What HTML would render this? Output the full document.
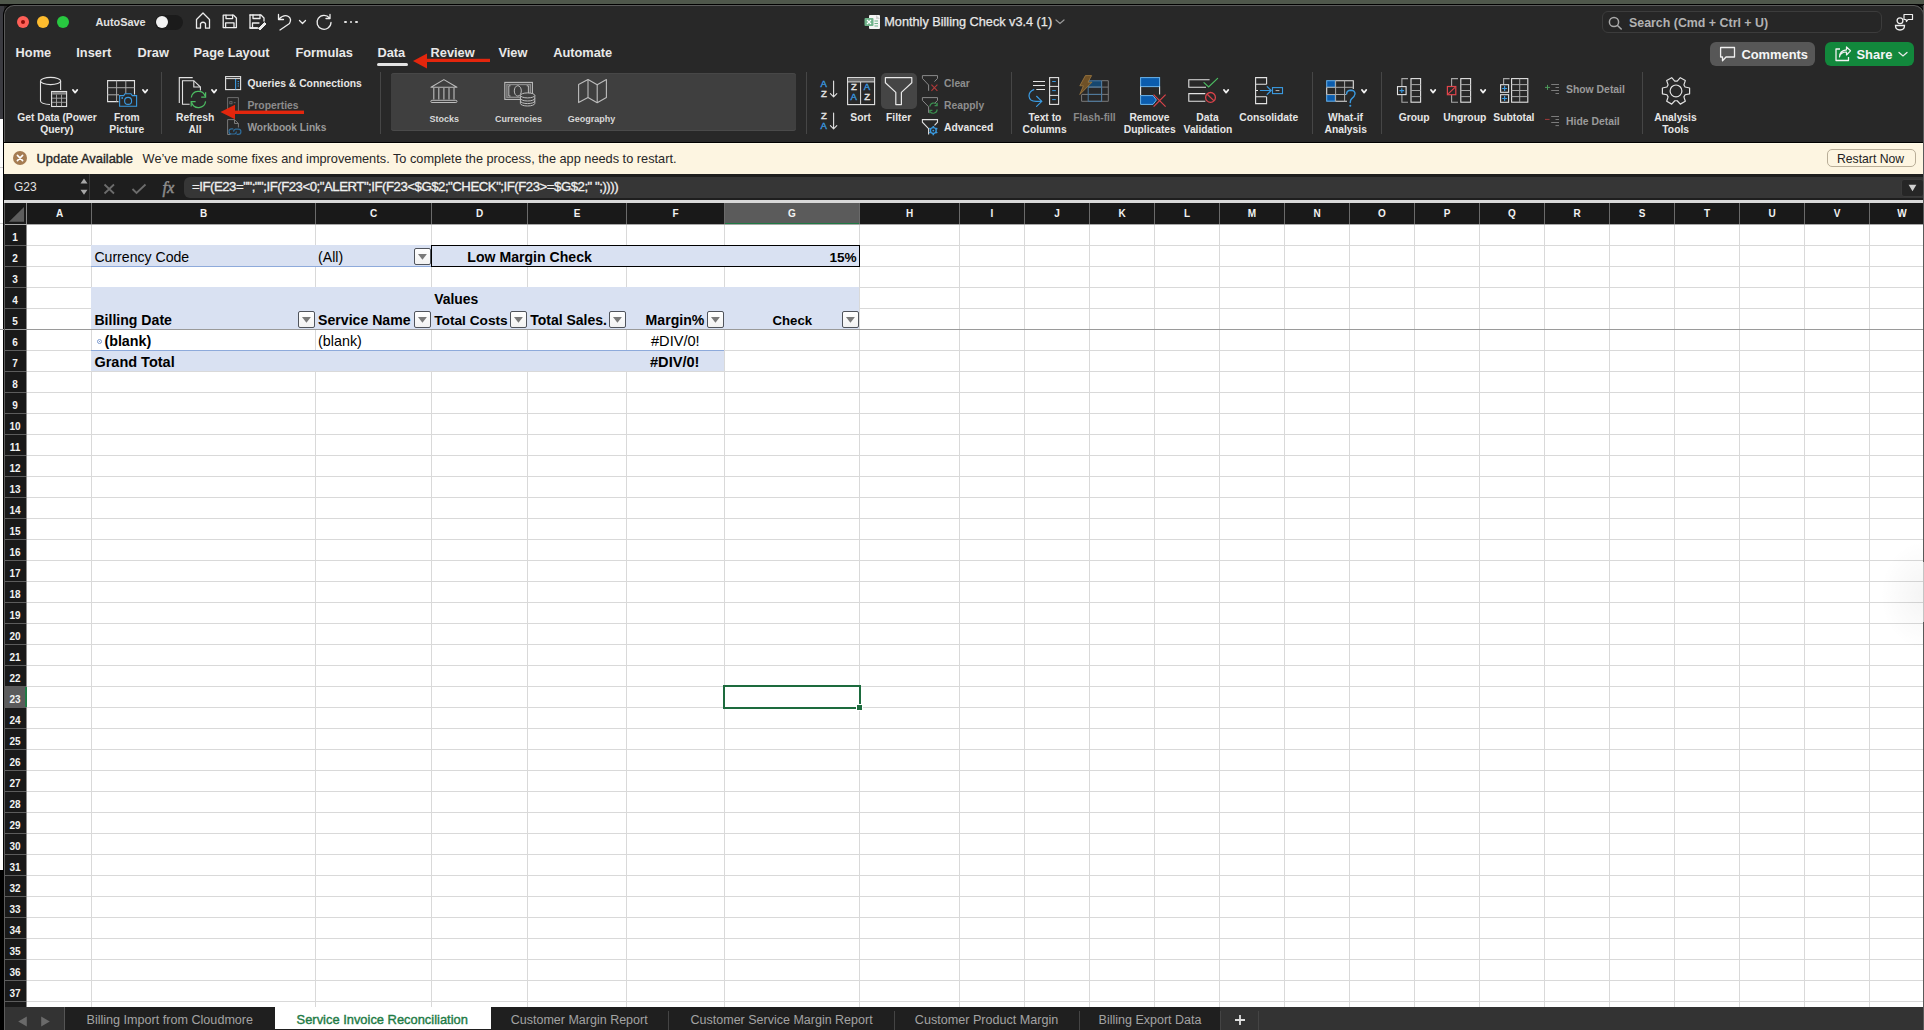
<!DOCTYPE html><html><head><meta charset="utf-8"><style>
html,body{margin:0;padding:0;width:1924px;height:1030px;overflow:hidden;background:#282828;}
.t{position:absolute;white-space:pre;line-height:1;}
.r{position:absolute;}
</style></head><body>
<div class="r" style="left:0px;top:0px;width:1924px;height:5px;background:#4f574b;"></div>
<div class="r" style="left:0px;top:4px;width:1924px;height:1px;background:#0a0a0a;"></div>
<div class="r" style="left:0px;top:5px;width:4px;height:114px;background:#3a3a40;"></div>
<div class="r" style="left:0px;top:119px;width:4px;height:751px;background:#fdfdfd;"></div>
<div class="r" style="left:0px;top:167px;width:4px;height:1px;background:#cfcfcf;"></div>
<div class="r" style="left:0px;top:223px;width:4px;height:1px;background:#cfcfcf;"></div>
<div class="r" style="left:0px;top:870px;width:4px;height:160px;background:#000;"></div>
<div class="r" style="left:0px;top:0px;width:1924px;height:5px;background:#4f574b;"></div>
<div class="r" style="left:0px;top:4px;width:1924px;height:2px;background:#0a0a0a;"></div>
<div class="r" style="left:4px;top:5px;width:1920px;height:1025px;background:#282828;border-top-left-radius:10px;border-top-right-radius:10px;border:1px solid #5a5a5a;border-bottom:none;box-sizing:border-box;box-shadow:0 0 0 1px #000;"></div>
<div class="r" style="left:16.9px;top:15.6px;width:12.4px;height:12.4px;border-radius:50%;background:#fe5f57;"></div>
<div class="r" style="left:36.8px;top:15.6px;width:12.4px;height:12.4px;border-radius:50%;background:#febc2e;"></div>
<div class="r" style="left:56.8px;top:15.6px;width:12.4px;height:12.4px;border-radius:50%;background:#28c840;"></div>
<div class="r" style="left:21px;top:19.7px;width:4.2px;height:4.2px;border-radius:50%;background:#8d0f0a;"></div>
<div class="t" style="left:95.4px;top:17.20px;font-size:10.9px;font-weight:700;color:#e2e2e2;font-family:'Liberation Sans', sans-serif;">AutoSave</div>
<div class="r" style="left:155.3px;top:15px;width:27.4px;height:15px;background:#1b1b1b;border-radius:8px;"></div>
<div class="r" style="left:155.8px;top:16px;width:12.4px;height:12.4px;border-radius:50%;background:#f2f2f2;"></div>
<svg class="r" style="left:194px;top:11px;" width="18" height="19" viewBox="0 0 18 19" fill="none"><path d="M2.5 8.5 L9 2 L15.5 8.5 V17.2 H11.5 V12.5 Q9 10 6.5 12.5 V17.2 H2.5 Z" stroke="#ededed" stroke-width="1.3" stroke-linecap="round" stroke-linejoin="round"/></svg>
<svg class="r" style="left:222px;top:14.4px;" width="16" height="15" viewBox="0 0 16 15" fill="none"><path d="M1.2 1.2 H11.6 L14.4 4 V13.6 H1.2 Z" stroke="#ededed" stroke-width="1.3" stroke-linecap="round" stroke-linejoin="round"/><path d="M4 1.2 V4.6 H10.6 V1.2" stroke="#ededed" stroke-width="1.3" stroke-linecap="round" stroke-linejoin="round"/><path d="M3.6 13.6 V8.8 H12 V13.6" stroke="#ededed" stroke-width="1.3" stroke-linecap="round" stroke-linejoin="round"/></svg>
<svg class="r" style="left:249px;top:14.4px;" width="18" height="16" viewBox="0 0 18 16" fill="none"><path d="M1 1 H12 L15 4 V7 M9 14 H1 Z" stroke="#ededed" stroke-width="1.3" stroke-linecap="round" stroke-linejoin="round"/><path d="M1 1 V14 H8" stroke="#ededed" stroke-width="1.3" stroke-linecap="round" stroke-linejoin="round"/><path d="M4 1 V4.5 H11 V1" stroke="#ededed" stroke-width="1.3" stroke-linecap="round" stroke-linejoin="round"/><path d="M3.5 14 V9 H10" stroke="#ededed" stroke-width="1.3" stroke-linecap="round" stroke-linejoin="round"/><path d="M9.5 14.5 L15.5 8.5 L17 10 L11 16 Z" fill="#ededed" stroke="#ededed" stroke-width="1"/></svg>
<svg class="r" style="left:276px;top:13px;" width="17" height="18" viewBox="0 0 17 18" fill="none"><path d="M2.5 1.5 V6.5 H7.5" stroke="#ededed" stroke-width="1.3" stroke-linecap="round" stroke-linejoin="round"/><path d="M2.8 6.2 Q8 1 12.5 3.5 Q16 6 13.5 10.5 L4 17" stroke="#ededed" stroke-width="1.3" stroke-linecap="round" stroke-linejoin="round"/></svg>
<svg class="r" style="left:298px;top:19px;" width="9" height="6" viewBox="0 0 9 6" fill="none"><path d="M1.5 1.5 L4.5 4.5 L7.5 1.5" stroke="#ededed" stroke-width="1.3" stroke-linecap="round" stroke-linejoin="round"/></svg>
<svg class="r" style="left:315px;top:13px;" width="18" height="18" viewBox="0 0 18 18" fill="none"><path d="M14.5 5 A7 7 0 1 0 16 9.5" stroke="#ededed" stroke-width="1.3" stroke-linecap="round" stroke-linejoin="round"/><path d="M15 1.5 V5.5 H11" stroke="#ededed" stroke-width="1.3" stroke-linecap="round" stroke-linejoin="round"/></svg>
<div class="r" style="left:344.2px;top:20.6px;width:2.6px;height:2.6px;border-radius:50%;background:#e5e5e5;"></div>
<div class="r" style="left:349.7px;top:20.6px;width:2.6px;height:2.6px;border-radius:50%;background:#e5e5e5;"></div>
<div class="r" style="left:355.2px;top:20.6px;width:2.6px;height:2.6px;border-radius:50%;background:#e5e5e5;"></div>
<svg class="r" style="left:864px;top:14px;" width="17" height="16" viewBox="0 0 17 16" fill="none"><rect x="5" y="1" width="11" height="14" rx="1" fill="#f4f4f4"/><path d="M12 1 L16 5 H12 Z" fill="#cfcfcf"/><rect x="0.5" y="4" width="9" height="8" rx="1" fill="#6fb38a"/><path d="M3 6 L7 10 M7 6 L3 10" stroke="#fff" stroke-width="1.2"/><path d="M10.5 7 H14 M10.5 9.5 H14 M10.5 12 H14" stroke="#6fb38a" stroke-width="1"/></svg>
<div class="t" style="left:884.3px;top:15.60px;font-size:12.7px;font-weight:400;color:#e8e8e8;font-family:'Liberation Sans', sans-serif;-webkit-text-stroke:0.25px #e8e8e8;">Monthly Billing Check v3.4 (1)</div>
<svg class="r" style="left:1055px;top:19px;" width="10" height="6" viewBox="0 0 10 6" fill="none"><path d="M1 1 L5 4.5 L9 1" stroke="#9a9a9a" stroke-width="1.2" stroke-linecap="round"/></svg>
<div class="r" style="left:1602px;top:11px;width:280px;height:22px;background:#262626;border:1px solid #3c3c3c;border-radius:6px;box-sizing:border-box;"></div>
<svg class="r" style="left:1608px;top:16px;" width="15" height="14" viewBox="0 0 15 14" fill="none"><circle cx="6" cy="6" r="4.6" stroke="#a8a8a8" stroke-width="1.5"/><path d="M9.5 9.5 L13.2 13" stroke="#a8a8a8" stroke-width="1.6" stroke-linecap="round"/></svg>
<div class="t" style="left:1629px;top:17.20px;font-size:12.4px;font-weight:700;color:#b2b2b2;font-family:'Liberation Sans', sans-serif;">Search (Cmd + Ctrl + U)</div>
<svg class="r" style="left:1894px;top:12px;" width="21" height="20" viewBox="0 0 21 20" fill="none"><circle cx="6" cy="8.7" r="2.9" stroke="#eee" stroke-width="1.3"/><path d="M1.5 13.5 H10.5 Q10.5 18 6 18 Q1.5 18 1.5 13.5 Z" stroke="#eee" stroke-width="1.3"/><path d="M10 2.5 H18.5 V7.5 H14 L12.5 9.5 L12 7.5 H10 Z" stroke="#eee" stroke-width="1.2" stroke-linejoin="round"/></svg>
<div class="t" style="left:15.6px;top:47.10px;font-size:12.8px;font-weight:700;color:#e9e9e9;font-family:'Liberation Sans', sans-serif;">Home</div>
<div class="t" style="left:76.3px;top:47.10px;font-size:12.8px;font-weight:700;color:#e9e9e9;font-family:'Liberation Sans', sans-serif;">Insert</div>
<div class="t" style="left:137.6px;top:47.10px;font-size:12.8px;font-weight:700;color:#e9e9e9;font-family:'Liberation Sans', sans-serif;">Draw</div>
<div class="t" style="left:193.5px;top:47.10px;font-size:12.8px;font-weight:700;color:#e9e9e9;font-family:'Liberation Sans', sans-serif;">Page Layout</div>
<div class="t" style="left:295.4px;top:47.10px;font-size:12.8px;font-weight:700;color:#e9e9e9;font-family:'Liberation Sans', sans-serif;">Formulas</div>
<div class="t" style="left:377.5px;top:47.10px;font-size:12.8px;font-weight:700;color:#e9e9e9;font-family:'Liberation Sans', sans-serif;">Data</div>
<div class="t" style="left:430.6px;top:47.10px;font-size:12.8px;font-weight:700;color:#e9e9e9;font-family:'Liberation Sans', sans-serif;">Review</div>
<div class="t" style="left:498.5px;top:47.10px;font-size:12.8px;font-weight:700;color:#e9e9e9;font-family:'Liberation Sans', sans-serif;">View</div>
<div class="t" style="left:553.2px;top:47.10px;font-size:12.8px;font-weight:700;color:#e9e9e9;font-family:'Liberation Sans', sans-serif;">Automate</div>
<div class="r" style="left:377px;top:63px;width:31px;height:3px;background:#e4e4e4;border-radius:2px;"></div>
<svg class="r" style="left:410px;top:52px;" width="82" height="18" viewBox="0 0 82 18" fill="none"><path d="M3 9 L17 1.6 V16.4 Z" fill="#e3260d"/><rect x="16" y="6.8" width="64" height="3.2" fill="#e3260d"/></svg>
<div class="r" style="left:1710px;top:42px;width:105px;height:24px;background:#575757;border-radius:6px;"></div>
<svg class="r" style="left:1719px;top:46px;" width="18" height="17" viewBox="0 0 18 17" fill="none"><path d="M1.6 1.5 H15.5 V11 H7 L3.5 14.8 V11 H1.6 Z" stroke="#f0f0f0" stroke-width="1.3" stroke-linejoin="round"/></svg>
<div class="t" style="left:1741.4px;top:49.20px;font-size:12.9px;font-weight:700;color:#f5f5f5;font-family:'Liberation Sans', sans-serif;">Comments</div>
<div class="r" style="left:1825px;top:42px;width:89px;height:24px;background:#12883c;border-radius:6px;"></div>
<svg class="r" style="left:1834px;top:46px;" width="18" height="16" viewBox="0 0 18 16" fill="none"><path d="M6 3 H2 V14.5 H14.5 V11" stroke="#f2f2f2" stroke-width="1.3" stroke-linejoin="round"/><path d="M5.5 11 Q6.5 6 12.5 6 V9 L16.5 4.8 L12.5 1 V3.8 Q5.5 4.5 5.5 11 Z" stroke="#f2f2f2" stroke-width="1.2" stroke-linejoin="round"/></svg>
<div class="t" style="left:1856.5px;top:49.20px;font-size:12.9px;font-weight:700;color:#f5f5f5;font-family:'Liberation Sans', sans-serif;">Share</div>
<svg class="r" style="left:1898px;top:51px;" width="10" height="7" viewBox="0 0 10 7" fill="none"><path d="M1 1.5 L5 5 L9 1.5" stroke="#eaeaea" stroke-width="1.3" stroke-linecap="round"/></svg>
<svg class="r" style="left:35px;top:72px" width="50" height="40" viewBox="35 72 50 40" fill="none">
<path d="M40.5 81 V101 Q41 104 50 104.5" stroke="#e2e2e2" stroke-width="1.1"/>
<path d="M60.6 81 V90" stroke="#e2e2e2" stroke-width="1.1"/>
<ellipse cx="50.6" cy="81" rx="10.1" ry="3.6" stroke="#e2e2e2" stroke-width="1.1"/>
<rect x="51.6" y="91.5" width="15" height="15" stroke="#e2e2e2" stroke-width="1.1" fill="#282828"/>
<rect x="52.2" y="92.1" width="13.8" height="2.5" fill="#8a8a8a"/>
<path d="M52 98.2 H66.2 M52 102.3 H66.2 M56.5 94.6 V106.3 M61.5 94.6 V106.3" stroke="#a8a8a8" stroke-width="0.9"/>
</svg>
<svg class="r" style="left:71px;top:88.2px;" width="9" height="7" viewBox="0 0 9 7" fill="none"><path d="M1.9 1.9 L4.1 4.6 L6.3 1.9" stroke="#f0f0f0" stroke-width="1.7" stroke-linecap="round" stroke-linejoin="round"/></svg>
<div class="t" style="left:17.23px;top:113.00px;font-size:10.3px;font-weight:700;color:#e6e6e6;font-family:'Liberation Sans', sans-serif;">Get Data (Power</div>
<div class="t" style="left:40.2px;top:124.60px;font-size:10.3px;font-weight:700;color:#e6e6e6;font-family:'Liberation Sans', sans-serif;">Query)</div>
<svg class="r" style="left:100px;top:72px" width="45" height="40" viewBox="100 72 45 40" fill="none">
<path d="M118.5 101.6 H107.6 V80.6 H134.5 V94.5" stroke="#e2e2e2" stroke-width="1.1"/>
<path d="M107.6 87.7 H134.5 M107.6 94.8 H119 M116.6 80.6 V101.6 M125.8 80.6 V94" stroke="#a8a8a8" stroke-width="1"/>
<path d="M119.6 95.6 H123.7 L125 93.7 H131 L132.3 95.6 H136.6 V106.3 H119.6 Z" stroke="#3a9ae0" stroke-width="1.1" fill="#282828"/>
<circle cx="128.1" cy="100.9" r="3.5" stroke="#3a9ae0" stroke-width="1.1"/>
<circle cx="122.2" cy="98" r="0.9" fill="#3a9ae0"/>
</svg>
<svg class="r" style="left:141.1px;top:88.2px;" width="9" height="7" viewBox="0 0 9 7" fill="none"><path d="M1.9 1.9 L4.1 4.6 L6.3 1.9" stroke="#f0f0f0" stroke-width="1.7" stroke-linecap="round" stroke-linejoin="round"/></svg>
<div class="t" style="left:113.92px;top:113.00px;font-size:10.3px;font-weight:700;color:#e6e6e6;font-family:'Liberation Sans', sans-serif;">From</div>
<div class="t" style="left:109.35px;top:124.60px;font-size:10.3px;font-weight:700;color:#e6e6e6;font-family:'Liberation Sans', sans-serif;">Picture</div>
<div class="r" style="left:161px;top:72px;width:1px;height:61.5px;background:#464646;"></div>
<svg class="r" style="left:175px;top:72px" width="35" height="40" viewBox="175 72 35 40" fill="none">
<path d="M179.3 103 V77.6 H192.7" stroke="#e2e2e2" stroke-width="1.1"/>
<path d="M189.6 104.3 H182.5 V80.7 H193.8 L200.4 87 V90.6" stroke="#e2e2e2" stroke-width="1.1"/>
<path d="M193.8 80.7 V87 H200.4" stroke="#e2e2e2" stroke-width="1.1"/>
<path d="M191.3 97.5 A7.2 7.2 0 0 1 205.2 96.2" stroke="#4cbd62" stroke-width="1.2"/>
<path d="M205.6 101.4 A7.2 7.2 0 0 1 191.6 102.5" stroke="#4cbd62" stroke-width="1.2"/>
<path d="M205.6 92.3 V97.1 H201.2" stroke="#4cbd62" stroke-width="1.2"/>
<path d="M191.2 106.6 V101.7 H195.6" stroke="#4cbd62" stroke-width="1.2"/>
</svg>
<svg class="r" style="left:210px;top:88.2px;" width="9" height="7" viewBox="0 0 9 7" fill="none"><path d="M1.9 1.9 L4.1 4.6 L6.3 1.9" stroke="#f0f0f0" stroke-width="1.7" stroke-linecap="round" stroke-linejoin="round"/></svg>
<div class="t" style="left:176.02px;top:113.00px;font-size:10.3px;font-weight:700;color:#e6e6e6;font-family:'Liberation Sans', sans-serif;">Refresh</div>
<div class="t" style="left:188.43px;top:124.60px;font-size:10.3px;font-weight:700;color:#e6e6e6;font-family:'Liberation Sans', sans-serif;">All</div>
<svg class="r" style="left:222px;top:74px" width="22" height="64" viewBox="222 74 22 64" fill="none">
<rect x="225.6" y="76.6" width="15" height="13" stroke="#e2e2e2" stroke-width="1.1"/>
<path d="M225.6 78.6 H240.6" stroke="#e2e2e2" stroke-width="1"/>
<path d="M235.6 79 V89.6" stroke="#3a9ae0" stroke-width="1.1"/>
<path d="M237.6 81.6 H239 M237.6 83.8 H239 M237.6 86 H239" stroke="#3a9ae0" stroke-width="1"/>
<path d="M227.6 111 V97.6 H238.4 V111" stroke="#6e6e6e" stroke-width="1"/>
<rect x="229.8" y="101.6" width="2.2" height="2.2" stroke="#6e6e6e" stroke-width="0.8"/>
<path d="M233.8 102.7 H235.6" stroke="#6e6e6e" stroke-width="0.9"/>
<path d="M230.5 134.5 H227.6 V119.6 H234.5 L238.4 123.5 V127.5" stroke="#7a7a7a" stroke-width="1"/>
<path d="M234.5 119.6 V123.5 H238.4" stroke="#7a7a7a" stroke-width="1"/>
<path d="M233.3 128.8 H231.6 A2.6 2.6 0 0 0 231.6 134 H234.5 A2.6 2.6 0 0 0 236.4 131.4 M236.6 134.4 H238.3 A2.6 2.6 0 0 0 238.3 129.2 H235.5 A2.6 2.6 0 0 0 233.5 131.6" stroke="#2f6c9a" stroke-width="1.2"/>
</svg>
<div class="t" style="left:247.4px;top:79.00px;font-size:10.35px;font-weight:700;color:#e6e6e6;font-family:'Liberation Sans', sans-serif;">Queries &amp; Connections</div>
<div class="t" style="left:247.4px;top:100.50px;font-size:10.35px;font-weight:700;color:#8c8c8c;font-family:'Liberation Sans', sans-serif;">Properties</div>
<div class="t" style="left:247.4px;top:123.00px;font-size:10.2px;font-weight:700;color:#9a9a9a;font-family:'Liberation Sans', sans-serif;">Workbook Links</div>
<svg class="r" style="left:218px;top:103px;" width="88" height="18" viewBox="0 0 88 18" fill="none"><path d="M2.5 9 L17 1.8 V16.2 Z" fill="#e3260d"/><rect x="16" y="7.6" width="70" height="3.4" fill="#e3260d"/></svg>
<div class="r" style="left:379.5px;top:72px;width:1px;height:61.5px;background:#464646;"></div>
<div class="r" style="left:390.5px;top:73px;width:405.5px;height:57.5px;background:#3f3f3f;border-radius:3px;box-shadow:inset 0 1px 0 #474747, inset 0 -1px 0 #4a4a4a;"></div>
<svg class="r" style="left:425px;top:76px" width="190" height="32" viewBox="425 76 190 32" fill="none">
<path d="M431 87.3 L443.9 79.6 L456.9 87.3 Z" stroke="#bdbdbd" stroke-width="1.1" stroke-linejoin="round"/>
<path d="M433.8 88 V99.6 M438.8 88 V99.6 M443.9 88 V99.6 M449 88 V99.6 M454 88 V99.6" stroke="#bdbdbd" stroke-width="1.1"/>
<rect x="430.8" y="100.3" width="26.2" height="2.2" rx="1.1" stroke="#bdbdbd" stroke-width="1"/>
<rect x="504.8" y="82.4" width="27.6" height="17" stroke="#bdbdbd" stroke-width="1.1"/>
<rect x="506.2" y="83.8" width="24.8" height="14.2" fill="#8a8a8a"/>
<rect x="507.6" y="85.2" width="22" height="11.4" fill="#3f3f3f"/>
<path d="M510.5 85.8 H508.8 V96 H510.5 M526.7 85.8 H528.4 V96 H526.7" stroke="#bdbdbd" stroke-width="1"/>
<ellipse cx="517.8" cy="90.9" rx="3.5" ry="5.2" stroke="#bdbdbd" stroke-width="1"/>
<path d="M520.4 95.4 V103.4 A7.2 2.6 0 0 0 534.8 103.4 V95.4" fill="#3f3f3f" stroke="#bdbdbd" stroke-width="1"/>
<ellipse cx="527.6" cy="95.4" rx="7.2" ry="2.5" fill="#3f3f3f" stroke="#bdbdbd" stroke-width="1"/>
<path d="M520.4 98.4 A7.2 2.6 0 0 0 534.8 98.4 M520.4 101 A7.2 2.6 0 0 0 534.8 101" stroke="#bdbdbd" stroke-width="1"/>
<path d="M578.6 84.5 L588 79.5 L597.2 84.8 L606.4 79.6 V97.6 L597.2 102.8 L588 97.5 L578.6 102.6 Z" stroke="#bdbdbd" stroke-width="1.1" stroke-linejoin="round"/>
<path d="M588 79.5 V97.5 M597.2 84.8 V102.8" stroke="#bdbdbd" stroke-width="1.1"/>
</svg>
<div class="t" style="left:429.45px;top:114.90px;font-size:9px;font-weight:700;color:#d8d8d8;font-family:'Liberation Sans', sans-serif;">Stocks</div>
<div class="t" style="left:494.9px;top:114.90px;font-size:9px;font-weight:700;color:#d8d8d8;font-family:'Liberation Sans', sans-serif;">Currencies</div>
<div class="t" style="left:567.65px;top:114.90px;font-size:9px;font-weight:700;color:#d8d8d8;font-family:'Liberation Sans', sans-serif;">Geography</div>
<div class="r" style="left:806px;top:72px;width:1px;height:61.5px;background:#464646;"></div>
<div class="t" style="left:820.6px;top:79.3px;font-size:9.6px;font-weight:400;color:#3a9ae0;font-family:'Liberation Sans', sans-serif;-webkit-text-stroke:0.35px #3a9ae0;">A</div>
<div class="t" style="left:821px;top:88.6px;font-size:9.6px;font-weight:400;color:#e2e2e2;font-family:'Liberation Sans', sans-serif;-webkit-text-stroke:0.35px #e2e2e2;">Z</div>
<div class="t" style="left:821px;top:111.2px;font-size:9.6px;font-weight:400;color:#e2e2e2;font-family:'Liberation Sans', sans-serif;-webkit-text-stroke:0.35px #e2e2e2;">Z</div>
<div class="t" style="left:820.6px;top:120.6px;font-size:9.6px;font-weight:400;color:#3a9ae0;font-family:'Liberation Sans', sans-serif;-webkit-text-stroke:0.35px #3a9ae0;">A</div>
<svg class="r" style="left:828px;top:78px" width="12" height="54" viewBox="828 78 12 54" fill="none">
<path d="M833.6 81 V96.6 M830.4 93.6 L833.6 96.8 L836.8 93.6" stroke="#e2e2e2" stroke-width="1.1" stroke-linecap="round" stroke-linejoin="round"/>
<path d="M833.6 113 V128.6 M830.4 125.6 L833.6 128.8 L836.8 125.6" stroke="#e2e2e2" stroke-width="1.1" stroke-linecap="round" stroke-linejoin="round"/>
</svg>
<svg class="r" style="left:845px;top:75px" width="34" height="34" viewBox="845 75 34 34" fill="none">
<rect x="847.6" y="77.6" width="27" height="27" stroke="#e2e2e2" stroke-width="1.1"/>
<rect x="848.2" y="78.2" width="25.8" height="3.4" fill="#6a6a6a"/>
<path d="M847.6 81.9 H874.6 M860.6 81.9 V104.6" stroke="#e2e2e2" stroke-width="1"/>
</svg>
<div class="t" style="left:850.9px;top:82.3px;font-size:9.6px;font-weight:400;color:#e2e2e2;font-family:'Liberation Sans', sans-serif;-webkit-text-stroke:0.35px #e2e2e2;">Z</div>
<div class="t" style="left:850.4px;top:92px;font-size:9.6px;font-weight:400;color:#3a9ae0;font-family:'Liberation Sans', sans-serif;-webkit-text-stroke:0.35px #3a9ae0;">A</div>
<div class="t" style="left:863.8px;top:82.3px;font-size:9.6px;font-weight:400;color:#3a9ae0;font-family:'Liberation Sans', sans-serif;-webkit-text-stroke:0.35px #3a9ae0;">A</div>
<div class="t" style="left:864.2px;top:92px;font-size:9.6px;font-weight:400;color:#e2e2e2;font-family:'Liberation Sans', sans-serif;-webkit-text-stroke:0.35px #e2e2e2;">Z</div>
<div class="r" style="left:881px;top:73px;width:36px;height:36px;background:#454545;border-radius:5px;"></div>
<svg class="r" style="left:882px;top:75px" width="34" height="32" viewBox="882 75 34 32" fill="none"><path d="M885.4 77.6 H911.8 V82.8 L901.4 92.4 V104.6 H895.8 V92.4 L885.4 82.8 Z" stroke="#e8e8e8" stroke-width="1.2" stroke-linejoin="round"/></svg>
<div class="t" style="left:850.3px;top:112.60px;font-size:10.3px;font-weight:700;color:#e6e6e6;font-family:'Liberation Sans', sans-serif;">Sort</div>
<div class="t" style="left:886.0px;top:112.60px;font-size:10.3px;font-weight:700;color:#e6e6e6;font-family:'Liberation Sans', sans-serif;">Filter</div>
<svg class="r" style="left:918px;top:72px" width="24" height="66" viewBox="918 72 24 66" fill="none">
<path d="M928.6 90.8 V85 L922.4 78.4 V75.6 H937.5 V78.4 L934.5 81.6" stroke="#8a8a8a" stroke-width="1"/>
<path d="M931.4 84.6 L937.4 90.8 M937.4 84.6 L931.4 90.8" stroke="#b03a3a" stroke-width="1.1"/>
<path d="M928.6 112.8 V106.8 L922.4 100.4 V97.6 H937.5 V100.4 L934.5 103.4" stroke="#8a8a8a" stroke-width="1"/>
<path d="M929.8 106.6 A4 4 0 0 1 937 104.6 M937.2 109.4 A4 4 0 0 1 930 111.6" stroke="#3c8f50" stroke-width="1.1"/>
<path d="M937.2 102.8 V105.6 H934.6 M929.8 113.2 V110.4 H932.4" stroke="#3c8f50" stroke-width="1.1"/>
<path d="M928.6 134.6 V128.6 L922.4 122.2 V119.6 H937.5 V122.2 L934.5 125.4" stroke="#e0e0e0" stroke-width="1.1"/>
<circle cx="933.3" cy="130.6" r="2.9" stroke="#3a9ae0" stroke-width="1.3"/>
<path d="M933.3 126 V127.6 M933.3 133.6 V135.2 M929.3 128.3 L930.7 129.1 M935.9 132.1 L937.3 132.9 M929.3 132.9 L930.7 132.1 M935.9 129.1 L937.3 128.3" stroke="#3a9ae0" stroke-width="1.6"/>
<circle cx="933.3" cy="130.6" r="0.9" fill="#3a9ae0"/>
</svg>
<div class="t" style="left:944.1px;top:79.00px;font-size:10.3px;font-weight:700;color:#8e8e8e;font-family:'Liberation Sans', sans-serif;">Clear</div>
<div class="t" style="left:944.1px;top:100.50px;font-size:10.3px;font-weight:700;color:#8e8e8e;font-family:'Liberation Sans', sans-serif;">Reapply</div>
<div class="t" style="left:944.1px;top:123.00px;font-size:10.3px;font-weight:700;color:#e6e6e6;font-family:'Liberation Sans', sans-serif;">Advanced</div>
<div class="r" style="left:1010.5px;top:72px;width:1px;height:61.5px;background:#464646;"></div>
<svg class="r" style="left:1025px;top:74px" width="40" height="36" viewBox="1025 74 40 36" fill="none">
<path d="M1033 81.5 H1045 M1033 85.5 H1045 M1036.3 89.5 H1045" stroke="#e2e2e2" stroke-width="1.1"/>
<path d="M1033.8 89.6 Q1029 91.5 1029 96 Q1029.5 101.4 1036 101.4 H1041.6" stroke="#3a9ae0" stroke-width="1.2" stroke-linecap="round"/>
<path d="M1036.6 96.3 L1041.8 101.4 L1036.6 106.4" stroke="#3a9ae0" stroke-width="1.2" stroke-linecap="round" stroke-linejoin="round"/>
<rect x="1049.6" y="77.6" width="9" height="26.8" stroke="#e2e2e2" stroke-width="1.1"/>
<path d="M1049.6 86.4 H1058.6 M1049.6 95.4 H1058.6" stroke="#e2e2e2" stroke-width="1"/>
<path d="M1052.2 81.5 H1055.8 M1052.2 90.6 H1055.8 M1052.2 99.6 H1055.8" stroke="#3a9ae0" stroke-width="1"/>
</svg>
<div class="t" style="left:1028.4px;top:113.00px;font-size:10.3px;font-weight:700;color:#e6e6e6;font-family:'Liberation Sans', sans-serif;">Text to</div>
<div class="t" style="left:1022.57px;top:124.60px;font-size:10.3px;font-weight:700;color:#e6e6e6;font-family:'Liberation Sans', sans-serif;">Columns</div>
<svg class="r" style="left:1076px;top:73px" width="36" height="32" viewBox="1076 73 36 32" fill="none">
<path d="M1088.2 80.8 H1101.4 V87 H1084 Z" fill="#16476f"/>
<path d="M1081.6 94.5 V101.3 H1108.3 V80.7 H1101.5" stroke="#7a7a7a" stroke-width="1"/>
<path d="M1082 94.4 H1108.3 M1088.2 87.1 H1108.3 M1101.6 80.8 V101.3" stroke="#7a7a7a" stroke-width="1"/>
<path d="M1088.2 80.8 H1101.6 V101.3 H1088.2 Z M1088.2 87.1 H1101.6 M1088.2 94.4 H1101.6" stroke="#4c7aa0" stroke-width="1"/>
<path d="M1085.4 75.6 H1091.6 L1088 82.2 H1092 L1079.8 94.5 L1083.4 85.8 H1079.8 Z" fill="#6f5127" stroke="#a07a40" stroke-width="0.8" stroke-linejoin="round"/>
</svg>
<div class="t" style="left:1073.33px;top:113.00px;font-size:10.3px;font-weight:700;color:#8a8a8a;font-family:'Liberation Sans', sans-serif;">Flash-fill</div>
<svg class="r" style="left:1136px;top:74px" width="34" height="36" viewBox="1136 74 34 36" fill="none">
<rect x="1140.6" y="77.6" width="19" height="9" fill="#0b5cad" stroke="#69b4ee" stroke-width="1"/>
<path d="M1140.6 86.6 V95.4 M1159.6 86.6 V94.6" stroke="#e2e2e2" stroke-width="1.1"/>
<path d="M1140.6 95.6 H1153 L1156.4 100 L1153 104.4 H1140.6 Z" fill="#0b5cad" stroke="#69b4ee" stroke-width="1"/>
<path d="M1153.6 94.6 L1165.6 106.6 M1165.6 94.6 L1153.6 106.6" stroke="#d9434a" stroke-width="1.2"/>
</svg>
<div class="t" style="left:1129.38px;top:113.00px;font-size:10.3px;font-weight:700;color:#e6e6e6;font-family:'Liberation Sans', sans-serif;">Remove</div>
<div class="t" style="left:1123.75px;top:124.60px;font-size:10.3px;font-weight:700;color:#e6e6e6;font-family:'Liberation Sans', sans-serif;">Duplicates</div>
<svg class="r" style="left:1184px;top:74px" width="38" height="32" viewBox="1184 74 38 32" fill="none">
<path d="M1209.6 79.8 H1188.8 V87.2 H1206" stroke="#e2e2e2" stroke-width="1.1"/>
<path d="M1204 82.6 L1208.6 87 L1217.6 78.4" stroke="#4cbd62" stroke-width="1.2" stroke-linecap="round"/>
<path d="M1205.3 93.6 H1188.8 V101.2 H1205.3" stroke="#e2e2e2" stroke-width="1.1"/>
<circle cx="1210.5" cy="97.4" r="4.9" stroke="#d9434a" stroke-width="1.3"/>
<path d="M1207.2 94.2 L1213.8 100.6" stroke="#d9434a" stroke-width="1.3"/>
</svg>
<svg class="r" style="left:1222px;top:88.2px;" width="9" height="7" viewBox="0 0 9 7" fill="none"><path d="M1.9 1.9 L4.1 4.6 L6.3 1.9" stroke="#f0f0f0" stroke-width="1.7" stroke-linecap="round" stroke-linejoin="round"/></svg>
<div class="t" style="left:1196.3px;top:113.00px;font-size:10.3px;font-weight:700;color:#e6e6e6;font-family:'Liberation Sans', sans-serif;">Data</div>
<div class="t" style="left:1183.58px;top:124.60px;font-size:10.3px;font-weight:700;color:#e6e6e6;font-family:'Liberation Sans', sans-serif;">Validation</div>
<svg class="r" style="left:1252px;top:74px" width="34" height="32" viewBox="1252 74 34 32" fill="none">
<path d="M1266.6 84.3 H1255.6 V77.6 H1266.6 V84.3 M1255.6 84.3 V96.6 M1255.6 90.5 H1258 M1266.6 96.8 H1255.6 V103.6 H1266.6 V96.8" stroke="#e2e2e2" stroke-width="1.1"/>
<path d="M1260.4 90.5 H1271.2 M1267.2 86.6 L1271.2 90.5 L1267.2 94.4" stroke="#3a9ae0" stroke-width="1.2" stroke-linecap="round" stroke-linejoin="round"/>
<rect x="1272.5" y="87.6" width="10" height="6" stroke="#3a9ae0" stroke-width="1.1"/>
<path d="M1275.6 90.6 H1279.4" stroke="#bbb" stroke-width="1"/>
</svg>
<div class="t" style="left:1239.23px;top:113.00px;font-size:10.3px;font-weight:700;color:#e6e6e6;font-family:'Liberation Sans', sans-serif;">Consolidate</div>
<div class="r" style="left:1311.5px;top:72px;width:1px;height:61.5px;background:#464646;"></div>
<svg class="r" style="left:1322px;top:76px" width="40" height="34" viewBox="1322 76 40 34" fill="none">
<rect x="1326.7" y="80.7" width="8.6" height="6.6" fill="#0b5cad" stroke="#69b4ee" stroke-width="1"/>
<rect x="1326.7" y="94.6" width="8.6" height="6.6" fill="#0b5cad" stroke="#69b4ee" stroke-width="1"/>
<path d="M1335.6 80.7 H1353.3 V89 M1326.7 87.4 V94.6 M1335.6 101.3 H1347" stroke="#e2e2e2" stroke-width="1.1"/>
<path d="M1335.3 87.3 H1353 M1335.3 94.5 H1346 M1335.6 80.7 V101.3 M1344.6 80.7 V101.3 M1326.7 87.3 H1335.3 M1326.7 94.5 H1335.3" stroke="#a8a8a8" stroke-width="1"/>
<path d="M1346.6 94 Q1346.6 90.2 1350.8 90.2 Q1355.2 90.4 1355 94 Q1354.6 96.6 1351.8 98.6 Q1350.3 99.8 1350.2 102.6" stroke="#3a9ae0" stroke-width="1.4" stroke-linecap="round"/>
<circle cx="1350.3" cy="105.8" r="1.05" fill="#3a9ae0"/>
</svg>
<svg class="r" style="left:1360.2px;top:88.2px;" width="9" height="7" viewBox="0 0 9 7" fill="none"><path d="M1.9 1.9 L4.1 4.6 L6.3 1.9" stroke="#f0f0f0" stroke-width="1.7" stroke-linecap="round" stroke-linejoin="round"/></svg>
<div class="t" style="left:1328.05px;top:113.00px;font-size:10.3px;font-weight:700;color:#e6e6e6;font-family:'Liberation Sans', sans-serif;">What-if</div>
<div class="t" style="left:1324.53px;top:124.60px;font-size:10.3px;font-weight:700;color:#e6e6e6;font-family:'Liberation Sans', sans-serif;">Analysis</div>
<div class="r" style="left:1380.5px;top:72px;width:1px;height:61.5px;background:#464646;"></div>
<svg class="r" style="left:1395px;top:76px" width="30" height="30" viewBox="1395 76 30 30" fill="none">
<path d="M1408 78.6 H1401.9 V86 M1401.9 94.8 V102.2 H1408" stroke="#a8a8a8" stroke-width="1.1"/>
<rect x="1397.5" y="86.6" width="8.6" height="8" stroke="#e2e2e2" stroke-width="1.1"/>
<path d="M1401.8 88.3 V92.9 M1399.5 90.6 H1404.1" stroke="#3a9ae0" stroke-width="1.1"/>
<rect x="1411" y="78.6" width="9.6" height="23.6" stroke="#e2e2e2" stroke-width="1.1"/>
<path d="M1411 84.6 H1420.6 M1411 90.5 H1420.6 M1411 96.6 H1420.6" stroke="#a8a8a8" stroke-width="1"/>
</svg>
<svg class="r" style="left:1429px;top:88.2px;" width="9" height="7" viewBox="0 0 9 7" fill="none"><path d="M1.9 1.9 L4.1 4.6 L6.3 1.9" stroke="#f0f0f0" stroke-width="1.7" stroke-linecap="round" stroke-linejoin="round"/></svg>
<div class="t" style="left:1398.75px;top:113.00px;font-size:10.3px;font-weight:700;color:#e6e6e6;font-family:'Liberation Sans', sans-serif;">Group</div>
<svg class="r" style="left:1444px;top:76px" width="30" height="30" viewBox="1444 76 30 30" fill="none">
<path d="M1458 78.6 H1451.6 V86 M1451.6 95 V102.2 H1458" stroke="#a8a8a8" stroke-width="1.1"/>
<rect x="1447.4" y="86.5" width="8.4" height="8.2" stroke="#e0444b" stroke-width="1.2"/>
<path d="M1448.2 93.8 L1455 87.4" stroke="#e0444b" stroke-width="1.1"/>
<rect x="1460.8" y="78.6" width="9.8" height="23.6" stroke="#e2e2e2" stroke-width="1.1"/>
<path d="M1460.8 84.6 H1470.6 M1460.8 90.5 H1470.6 M1460.8 96.6 H1470.6" stroke="#a8a8a8" stroke-width="1"/>
</svg>
<svg class="r" style="left:1479.1px;top:88.2px;" width="9" height="7" viewBox="0 0 9 7" fill="none"><path d="M1.9 1.9 L4.1 4.6 L6.3 1.9" stroke="#f0f0f0" stroke-width="1.7" stroke-linecap="round" stroke-linejoin="round"/></svg>
<div class="t" style="left:1443.35px;top:113.00px;font-size:10.3px;font-weight:700;color:#e6e6e6;font-family:'Liberation Sans', sans-serif;">Ungroup</div>
<svg class="r" style="left:1497px;top:76px" width="34" height="30" viewBox="1497 76 34 30" fill="none">
<path d="M1509.6 78.6 H1503.6 V84" stroke="#a8a8a8" stroke-width="1.1"/>
<rect x="1500.6" y="84.7" width="8" height="7.6" stroke="#e2e2e2" stroke-width="1.1"/>
<rect x="1500.6" y="94.7" width="8" height="7.6" stroke="#e2e2e2" stroke-width="1.1"/>
<path d="M1504.6 86 V91 M1502.1 88.5 H1507.1 M1504.6 96 V101 M1502.1 98.5 H1507.1" stroke="#3a9ae0" stroke-width="1.2"/>
<rect x="1511.6" y="78.6" width="16.2" height="23.6" stroke="#e2e2e2" stroke-width="1.1"/>
<path d="M1511.6 84.6 H1527.8 M1511.6 90.5 H1527.8 M1511.6 96.6 H1527.8 M1519.7 78.6 V102.2" stroke="#a8a8a8" stroke-width="1"/>
</svg>
<div class="t" style="left:1493.3px;top:113.00px;font-size:10.3px;font-weight:700;color:#e6e6e6;font-family:'Liberation Sans', sans-serif;">Subtotal</div>
<svg class="r" style="left:1543px;top:80px" width="20" height="50" viewBox="1543 80 20 50" fill="none">
<path d="M1545 87.4 H1550 M1547.5 84.9 V89.9" stroke="#4d9a5a" stroke-width="1"/>
<path d="M1551.2 84.5 H1559 M1555.5 87.5 H1559 M1551.2 90.5 H1559 M1555.5 93.5 H1559" stroke="#7c7c7c" stroke-width="1"/>
<path d="M1545 119.4 H1549.6" stroke="#a03b3b" stroke-width="1"/>
<path d="M1551.2 116.5 H1559 M1555.5 119.5 H1559 M1551.2 122.5 H1559 M1555.5 125.6 H1559" stroke="#7c7c7c" stroke-width="1"/>
</svg>
<div class="t" style="left:1566px;top:85.30px;font-size:10.4px;font-weight:700;color:#9a9a9a;font-family:'Liberation Sans', sans-serif;">Show Detail</div>
<div class="t" style="left:1566px;top:116.80px;font-size:10.4px;font-weight:700;color:#9a9a9a;font-family:'Liberation Sans', sans-serif;">Hide Detail</div>
<div class="r" style="left:1642.3px;top:72px;width:1px;height:61.5px;background:#464646;"></div>
<svg class="r" style="left:1658px;top:73px" width="38" height="36" viewBox="1658 73 38 36" fill="none"><path d="M1685.11 87.03 L1689.60 88.01 L1689.60 93.79 L1685.11 94.77 L1683.91 96.86 L1685.30 101.23 L1680.30 104.12 L1677.21 100.73 L1674.79 100.73 L1671.70 104.12 L1666.70 101.23 L1668.09 96.86 L1666.89 94.77 L1662.40 93.79 L1662.40 88.01 L1666.89 87.03 L1668.09 84.94 L1666.70 80.57 L1671.70 77.68 L1674.79 81.07 L1677.21 81.07 L1680.30 77.68 L1685.30 80.57 L1683.91 84.94 Z" stroke="#e2e2e2" stroke-width="1.2" stroke-linejoin="round"/><circle cx="1676.0" cy="90.9" r="5.9" stroke="#e2e2e2" stroke-width="1.2"/></svg>
<div class="t" style="left:1654.33px;top:113.00px;font-size:10.3px;font-weight:700;color:#e6e6e6;font-family:'Liberation Sans', sans-serif;">Analysis</div>
<div class="t" style="left:1662.35px;top:124.60px;font-size:10.3px;font-weight:700;color:#e6e6e6;font-family:'Liberation Sans', sans-serif;">Tools</div>
<div class="r" style="left:4px;top:141.5px;width:1920px;height:1.5px;background:#000;"></div>
<div class="r" style="left:4px;top:143px;width:1920px;height:31px;background:#fdf5e1;"></div>
<div class="r" style="left:4px;top:143px;width:1920px;height:1px;background:#fffbe9;"></div>
<div class="r" style="left:13.1px;top:151.2px;width:14px;height:14px;border-radius:50%;background:#a57c52;"></div>
<svg class="r" style="left:13px;top:151px;" width="14" height="14" viewBox="0 0 14 14" fill="none"><path d="M4.4 4.4 L9.6 9.6 M9.6 4.4 L4.4 9.6" stroke="#fff" stroke-width="1.6" stroke-linecap="round"/></svg>
<div class="t" style="left:36.5px;top:153.00px;font-size:12.9px;font-weight:400;color:#262626;font-family:'Liberation Sans', sans-serif;-webkit-text-stroke:0.35px #262626;">Update Available</div>
<div class="t" style="left:142.6px;top:153.00px;font-size:12.75px;font-weight:400;color:#262626;font-family:'Liberation Sans', sans-serif;">We’ve made some fixes and improvements. To complete the process, the app needs to restart.</div>
<div class="r" style="left:1827px;top:149px;width:89px;height:18px;background:#fdf5e1;border:1px solid #b9ae98;border-radius:5px;box-sizing:border-box;"></div>
<div class="t" style="left:1837px;top:153.00px;font-size:12.2px;font-weight:400;color:#222;font-family:'Liberation Sans', sans-serif;">Restart Now</div>
<div class="r" style="left:4px;top:174px;width:1920px;height:26px;background:#1e1e1e;"></div>
<div class="r" style="left:184px;top:177px;width:1740px;height:21px;background:#363636;border-top-left-radius:6px;border-bottom-left-radius:6px;"></div>
<div class="r" style="left:88.5px;top:174px;width:1px;height:26px;background:#3a3a3a;"></div>
<div class="t" style="left:14px;top:181.00px;font-size:12px;font-weight:400;color:#e2e2e2;font-family:'Liberation Sans', sans-serif;">G23</div>
<svg class="r" style="left:79px;top:177px;" width="10" height="20" viewBox="0 0 10 20" fill="none"><path d="M1.5 6.6 L5 1.6 L8.5 6.6 Z M1.5 12.8 L5 17.8 L8.5 12.8 Z" fill="#a8a8a8"/></svg>
<svg class="r" style="left:103px;top:183px;" width="13" height="12" viewBox="0 0 13 12" fill="none"><path d="M1.5 1.5 L11 10.5 M11 1.5 L1.5 10.5" stroke="#6c6c6c" stroke-width="1.8"/></svg>
<svg class="r" style="left:131px;top:183px;" width="16" height="12" viewBox="0 0 16 12" fill="none"><path d="M1.5 6 L5.5 10 L14.5 1.5" stroke="#6c6c6c" stroke-width="1.8"/></svg>
<div class="t" style="left:162.5px;top:180.00px;font-size:16.5px;font-weight:400;color:#8c8c8c;font-family:'Liberation Serif', serif;-webkit-text-stroke:0.5px #8c8c8c;"><i>fx</i></div>
<div class="t" style="left:192px;top:180.30px;font-size:13.2px;font-weight:400;color:#f0f0f0;font-family:'Liberation Sans', sans-serif;letter-spacing:-0.47px;-webkit-text-stroke:0.3px #f0f0f0;">=IF(E23=&quot;&quot;;&quot;&quot;;IF(F23&lt;0;&quot;ALERT&quot;;IF(F23&lt;$G$2;&quot;CHECK&quot;;IF(F23&gt;=$G$2;&quot; &quot;;))))</div>
<div class="r" style="left:1900.5px;top:178.5px;width:23px;height:18px;background:#262626;border:1px solid #3a3a3a;border-radius:3px;box-sizing:border-box;"></div>
<svg class="r" style="left:1908px;top:184px;" width="10" height="9" viewBox="0 0 10 9" fill="none"><path d="M0.6 0.8 H8.4 L4.5 7.2 Z" fill="#cfcfcf"/></svg>
<div class="r" style="left:4px;top:200px;width:1920px;height:3px;background:#d9d9d9;"></div>
<div class="r" style="left:4px;top:203px;width:1920px;height:804px;background:#ffffff;"></div>
<div class="r" style="left:4px;top:203px;width:1920px;height:21px;background:#191919;"></div>
<div class="r" style="left:4px;top:224px;width:22px;height:783px;background:#191919;"></div>
<div class="r" style="left:725px;top:203px;width:134px;height:21px;background:#5b5b5b;"></div>
<div class="r" style="left:725px;top:223px;width:134px;height:1.5px;background:#1f7a44;"></div>
<svg class="r" style="left:8px;top:206px;" width="17" height="17" viewBox="0 0 17 17" fill="none"><path d="M16 1 V15.8 H1 Z" fill="#5c5c5c"/></svg>
<div class="r" style="left:26px;top:203px;width:1px;height:21px;background:#8a8a8a;"></div>
<div class="r" style="left:91px;top:203px;width:1px;height:21px;background:#6a6a6a;"></div>
<div class="r" style="left:315px;top:203px;width:1px;height:21px;background:#6a6a6a;"></div>
<div class="r" style="left:431px;top:203px;width:1px;height:21px;background:#6a6a6a;"></div>
<div class="r" style="left:527px;top:203px;width:1px;height:21px;background:#6a6a6a;"></div>
<div class="r" style="left:626px;top:203px;width:1px;height:21px;background:#6a6a6a;"></div>
<div class="r" style="left:724px;top:203px;width:1px;height:21px;background:#6a6a6a;"></div>
<div class="r" style="left:859px;top:203px;width:1px;height:21px;background:#6a6a6a;"></div>
<div class="r" style="left:959px;top:203px;width:1px;height:21px;background:#6a6a6a;"></div>
<div class="r" style="left:1024px;top:203px;width:1px;height:21px;background:#6a6a6a;"></div>
<div class="r" style="left:1089px;top:203px;width:1px;height:21px;background:#6a6a6a;"></div>
<div class="r" style="left:1154px;top:203px;width:1px;height:21px;background:#6a6a6a;"></div>
<div class="r" style="left:1219px;top:203px;width:1px;height:21px;background:#6a6a6a;"></div>
<div class="r" style="left:1284px;top:203px;width:1px;height:21px;background:#6a6a6a;"></div>
<div class="r" style="left:1349px;top:203px;width:1px;height:21px;background:#6a6a6a;"></div>
<div class="r" style="left:1414px;top:203px;width:1px;height:21px;background:#6a6a6a;"></div>
<div class="r" style="left:1479px;top:203px;width:1px;height:21px;background:#6a6a6a;"></div>
<div class="r" style="left:1544px;top:203px;width:1px;height:21px;background:#6a6a6a;"></div>
<div class="r" style="left:1609px;top:203px;width:1px;height:21px;background:#6a6a6a;"></div>
<div class="r" style="left:1674px;top:203px;width:1px;height:21px;background:#6a6a6a;"></div>
<div class="r" style="left:1739px;top:203px;width:1px;height:21px;background:#6a6a6a;"></div>
<div class="r" style="left:1804px;top:203px;width:1px;height:21px;background:#6a6a6a;"></div>
<div class="r" style="left:1869px;top:203px;width:1px;height:21px;background:#6a6a6a;"></div>
<div class="r" style="left:4px;top:224px;width:1920px;height:1px;background:#a8a8a8;"></div>
<div class="r" style="left:91px;top:225px;width:1px;height:782px;background:#d9d9d9;"></div>
<div class="r" style="left:315px;top:225px;width:1px;height:782px;background:#d9d9d9;"></div>
<div class="r" style="left:431px;top:225px;width:1px;height:782px;background:#d9d9d9;"></div>
<div class="r" style="left:527px;top:225px;width:1px;height:782px;background:#d9d9d9;"></div>
<div class="r" style="left:626px;top:225px;width:1px;height:782px;background:#d9d9d9;"></div>
<div class="r" style="left:724px;top:225px;width:1px;height:782px;background:#d9d9d9;"></div>
<div class="r" style="left:859px;top:225px;width:1px;height:782px;background:#d9d9d9;"></div>
<div class="r" style="left:959px;top:225px;width:1px;height:782px;background:#d9d9d9;"></div>
<div class="r" style="left:1024px;top:225px;width:1px;height:782px;background:#d9d9d9;"></div>
<div class="r" style="left:1089px;top:225px;width:1px;height:782px;background:#d9d9d9;"></div>
<div class="r" style="left:1154px;top:225px;width:1px;height:782px;background:#d9d9d9;"></div>
<div class="r" style="left:1219px;top:225px;width:1px;height:782px;background:#d9d9d9;"></div>
<div class="r" style="left:1284px;top:225px;width:1px;height:782px;background:#d9d9d9;"></div>
<div class="r" style="left:1349px;top:225px;width:1px;height:782px;background:#d9d9d9;"></div>
<div class="r" style="left:1414px;top:225px;width:1px;height:782px;background:#d9d9d9;"></div>
<div class="r" style="left:1479px;top:225px;width:1px;height:782px;background:#d9d9d9;"></div>
<div class="r" style="left:1544px;top:225px;width:1px;height:782px;background:#d9d9d9;"></div>
<div class="r" style="left:1609px;top:225px;width:1px;height:782px;background:#d9d9d9;"></div>
<div class="r" style="left:1674px;top:225px;width:1px;height:782px;background:#d9d9d9;"></div>
<div class="r" style="left:1739px;top:225px;width:1px;height:782px;background:#d9d9d9;"></div>
<div class="r" style="left:1804px;top:225px;width:1px;height:782px;background:#d9d9d9;"></div>
<div class="r" style="left:1869px;top:225px;width:1px;height:782px;background:#d9d9d9;"></div>
<div class="r" style="left:27px;top:245px;width:1897px;height:1px;background:#d9d9d9;"></div>
<div class="r" style="left:4px;top:245px;width:22px;height:1px;background:#5c5c5c;"></div>
<div class="r" style="left:27px;top:266px;width:1897px;height:1px;background:#d9d9d9;"></div>
<div class="r" style="left:4px;top:266px;width:22px;height:1px;background:#5c5c5c;"></div>
<div class="r" style="left:27px;top:287px;width:1897px;height:1px;background:#d9d9d9;"></div>
<div class="r" style="left:4px;top:287px;width:22px;height:1px;background:#5c5c5c;"></div>
<div class="r" style="left:27px;top:308px;width:1897px;height:1px;background:#d9d9d9;"></div>
<div class="r" style="left:4px;top:308px;width:22px;height:1px;background:#5c5c5c;"></div>
<div class="r" style="left:27px;top:329px;width:1897px;height:1px;background:#d9d9d9;"></div>
<div class="r" style="left:4px;top:329px;width:22px;height:1px;background:#5c5c5c;"></div>
<div class="r" style="left:27px;top:350px;width:1897px;height:1px;background:#d9d9d9;"></div>
<div class="r" style="left:4px;top:350px;width:22px;height:1px;background:#5c5c5c;"></div>
<div class="r" style="left:27px;top:371px;width:1897px;height:1px;background:#d9d9d9;"></div>
<div class="r" style="left:4px;top:371px;width:22px;height:1px;background:#5c5c5c;"></div>
<div class="r" style="left:27px;top:392px;width:1897px;height:1px;background:#d9d9d9;"></div>
<div class="r" style="left:4px;top:392px;width:22px;height:1px;background:#5c5c5c;"></div>
<div class="r" style="left:27px;top:413px;width:1897px;height:1px;background:#d9d9d9;"></div>
<div class="r" style="left:4px;top:413px;width:22px;height:1px;background:#5c5c5c;"></div>
<div class="r" style="left:27px;top:434px;width:1897px;height:1px;background:#d9d9d9;"></div>
<div class="r" style="left:4px;top:434px;width:22px;height:1px;background:#5c5c5c;"></div>
<div class="r" style="left:27px;top:455px;width:1897px;height:1px;background:#d9d9d9;"></div>
<div class="r" style="left:4px;top:455px;width:22px;height:1px;background:#5c5c5c;"></div>
<div class="r" style="left:27px;top:476px;width:1897px;height:1px;background:#d9d9d9;"></div>
<div class="r" style="left:4px;top:476px;width:22px;height:1px;background:#5c5c5c;"></div>
<div class="r" style="left:27px;top:497px;width:1897px;height:1px;background:#d9d9d9;"></div>
<div class="r" style="left:4px;top:497px;width:22px;height:1px;background:#5c5c5c;"></div>
<div class="r" style="left:27px;top:518px;width:1897px;height:1px;background:#d9d9d9;"></div>
<div class="r" style="left:4px;top:518px;width:22px;height:1px;background:#5c5c5c;"></div>
<div class="r" style="left:27px;top:539px;width:1897px;height:1px;background:#d9d9d9;"></div>
<div class="r" style="left:4px;top:539px;width:22px;height:1px;background:#5c5c5c;"></div>
<div class="r" style="left:27px;top:560px;width:1897px;height:1px;background:#d9d9d9;"></div>
<div class="r" style="left:4px;top:560px;width:22px;height:1px;background:#5c5c5c;"></div>
<div class="r" style="left:27px;top:581px;width:1897px;height:1px;background:#d9d9d9;"></div>
<div class="r" style="left:4px;top:581px;width:22px;height:1px;background:#5c5c5c;"></div>
<div class="r" style="left:27px;top:602px;width:1897px;height:1px;background:#d9d9d9;"></div>
<div class="r" style="left:4px;top:602px;width:22px;height:1px;background:#5c5c5c;"></div>
<div class="r" style="left:27px;top:623px;width:1897px;height:1px;background:#d9d9d9;"></div>
<div class="r" style="left:4px;top:623px;width:22px;height:1px;background:#5c5c5c;"></div>
<div class="r" style="left:27px;top:644px;width:1897px;height:1px;background:#d9d9d9;"></div>
<div class="r" style="left:4px;top:644px;width:22px;height:1px;background:#5c5c5c;"></div>
<div class="r" style="left:27px;top:665px;width:1897px;height:1px;background:#d9d9d9;"></div>
<div class="r" style="left:4px;top:665px;width:22px;height:1px;background:#5c5c5c;"></div>
<div class="r" style="left:27px;top:686px;width:1897px;height:1px;background:#d9d9d9;"></div>
<div class="r" style="left:4px;top:686px;width:22px;height:1px;background:#5c5c5c;"></div>
<div class="r" style="left:27px;top:707px;width:1897px;height:1px;background:#d9d9d9;"></div>
<div class="r" style="left:4px;top:707px;width:22px;height:1px;background:#5c5c5c;"></div>
<div class="r" style="left:27px;top:728px;width:1897px;height:1px;background:#d9d9d9;"></div>
<div class="r" style="left:4px;top:728px;width:22px;height:1px;background:#5c5c5c;"></div>
<div class="r" style="left:27px;top:749px;width:1897px;height:1px;background:#d9d9d9;"></div>
<div class="r" style="left:4px;top:749px;width:22px;height:1px;background:#5c5c5c;"></div>
<div class="r" style="left:27px;top:770px;width:1897px;height:1px;background:#d9d9d9;"></div>
<div class="r" style="left:4px;top:770px;width:22px;height:1px;background:#5c5c5c;"></div>
<div class="r" style="left:27px;top:791px;width:1897px;height:1px;background:#d9d9d9;"></div>
<div class="r" style="left:4px;top:791px;width:22px;height:1px;background:#5c5c5c;"></div>
<div class="r" style="left:27px;top:812px;width:1897px;height:1px;background:#d9d9d9;"></div>
<div class="r" style="left:4px;top:812px;width:22px;height:1px;background:#5c5c5c;"></div>
<div class="r" style="left:27px;top:833px;width:1897px;height:1px;background:#d9d9d9;"></div>
<div class="r" style="left:4px;top:833px;width:22px;height:1px;background:#5c5c5c;"></div>
<div class="r" style="left:27px;top:854px;width:1897px;height:1px;background:#d9d9d9;"></div>
<div class="r" style="left:4px;top:854px;width:22px;height:1px;background:#5c5c5c;"></div>
<div class="r" style="left:27px;top:875px;width:1897px;height:1px;background:#d9d9d9;"></div>
<div class="r" style="left:4px;top:875px;width:22px;height:1px;background:#5c5c5c;"></div>
<div class="r" style="left:27px;top:896px;width:1897px;height:1px;background:#d9d9d9;"></div>
<div class="r" style="left:4px;top:896px;width:22px;height:1px;background:#5c5c5c;"></div>
<div class="r" style="left:27px;top:917px;width:1897px;height:1px;background:#d9d9d9;"></div>
<div class="r" style="left:4px;top:917px;width:22px;height:1px;background:#5c5c5c;"></div>
<div class="r" style="left:27px;top:938px;width:1897px;height:1px;background:#d9d9d9;"></div>
<div class="r" style="left:4px;top:938px;width:22px;height:1px;background:#5c5c5c;"></div>
<div class="r" style="left:27px;top:959px;width:1897px;height:1px;background:#d9d9d9;"></div>
<div class="r" style="left:4px;top:959px;width:22px;height:1px;background:#5c5c5c;"></div>
<div class="r" style="left:27px;top:980px;width:1897px;height:1px;background:#d9d9d9;"></div>
<div class="r" style="left:4px;top:980px;width:22px;height:1px;background:#5c5c5c;"></div>
<div class="r" style="left:27px;top:1001px;width:1897px;height:1px;background:#d9d9d9;"></div>
<div class="r" style="left:4px;top:1001px;width:22px;height:1px;background:#5c5c5c;"></div>
<div class="r" style="left:26px;top:225px;width:1px;height:782px;background:#8a8a8a;"></div>
<div class="t" style="left:55.9px;top:209.00px;font-size:10px;font-weight:700;color:#f2f2f2;font-family:'Liberation Sans', sans-serif;">A</div>
<div class="t" style="left:199.9px;top:209.00px;font-size:10px;font-weight:700;color:#f2f2f2;font-family:'Liberation Sans', sans-serif;">B</div>
<div class="t" style="left:369.9px;top:209.00px;font-size:10px;font-weight:700;color:#f2f2f2;font-family:'Liberation Sans', sans-serif;">C</div>
<div class="t" style="left:475.9px;top:209.00px;font-size:10px;font-weight:700;color:#f2f2f2;font-family:'Liberation Sans', sans-serif;">D</div>
<div class="t" style="left:573.67px;top:209.00px;font-size:10px;font-weight:700;color:#f2f2f2;font-family:'Liberation Sans', sans-serif;">E</div>
<div class="t" style="left:672.45px;top:209.00px;font-size:10px;font-weight:700;color:#f2f2f2;font-family:'Liberation Sans', sans-serif;">F</div>
<div class="t" style="left:788.1px;top:209.00px;font-size:10px;font-weight:700;color:#f2f2f2;font-family:'Liberation Sans', sans-serif;">G</div>
<div class="t" style="left:905.9px;top:209.00px;font-size:10px;font-weight:700;color:#f2f2f2;font-family:'Liberation Sans', sans-serif;">H</div>
<div class="t" style="left:990.6px;top:209.00px;font-size:10px;font-weight:700;color:#f2f2f2;font-family:'Liberation Sans', sans-serif;">I</div>
<div class="t" style="left:1054.22px;top:209.00px;font-size:10px;font-weight:700;color:#f2f2f2;font-family:'Liberation Sans', sans-serif;">J</div>
<div class="t" style="left:1118.4px;top:209.00px;font-size:10px;font-weight:700;color:#f2f2f2;font-family:'Liberation Sans', sans-serif;">K</div>
<div class="t" style="left:1183.95px;top:209.00px;font-size:10px;font-weight:700;color:#f2f2f2;font-family:'Liberation Sans', sans-serif;">L</div>
<div class="t" style="left:1247.83px;top:209.00px;font-size:10px;font-weight:700;color:#f2f2f2;font-family:'Liberation Sans', sans-serif;">M</div>
<div class="t" style="left:1313.4px;top:209.00px;font-size:10px;font-weight:700;color:#f2f2f2;font-family:'Liberation Sans', sans-serif;">N</div>
<div class="t" style="left:1378.1px;top:209.00px;font-size:10px;font-weight:700;color:#f2f2f2;font-family:'Liberation Sans', sans-serif;">O</div>
<div class="t" style="left:1443.67px;top:209.00px;font-size:10px;font-weight:700;color:#f2f2f2;font-family:'Liberation Sans', sans-serif;">P</div>
<div class="t" style="left:1508.1px;top:209.00px;font-size:10px;font-weight:700;color:#f2f2f2;font-family:'Liberation Sans', sans-serif;">Q</div>
<div class="t" style="left:1573.4px;top:209.00px;font-size:10px;font-weight:700;color:#f2f2f2;font-family:'Liberation Sans', sans-serif;">R</div>
<div class="t" style="left:1638.67px;top:209.00px;font-size:10px;font-weight:700;color:#f2f2f2;font-family:'Liberation Sans', sans-serif;">S</div>
<div class="t" style="left:1703.95px;top:209.00px;font-size:10px;font-weight:700;color:#f2f2f2;font-family:'Liberation Sans', sans-serif;">T</div>
<div class="t" style="left:1768.4px;top:209.00px;font-size:10px;font-weight:700;color:#f2f2f2;font-family:'Liberation Sans', sans-serif;">U</div>
<div class="t" style="left:1833.67px;top:209.00px;font-size:10px;font-weight:700;color:#f2f2f2;font-family:'Liberation Sans', sans-serif;">V</div>
<div class="t" style="left:1897.28px;top:209.00px;font-size:10px;font-weight:700;color:#f2f2f2;font-family:'Liberation Sans', sans-serif;">W</div>
<div class="t" style="left:12.22px;top:233.00px;font-size:10px;font-weight:700;color:#f2f2f2;font-family:'Liberation Sans', sans-serif;">1</div>
<div class="t" style="left:12.22px;top:254.00px;font-size:10px;font-weight:700;color:#f2f2f2;font-family:'Liberation Sans', sans-serif;">2</div>
<div class="t" style="left:12.22px;top:275.00px;font-size:10px;font-weight:700;color:#f2f2f2;font-family:'Liberation Sans', sans-serif;">3</div>
<div class="t" style="left:12.22px;top:296.00px;font-size:10px;font-weight:700;color:#f2f2f2;font-family:'Liberation Sans', sans-serif;">4</div>
<div class="t" style="left:12.22px;top:317.00px;font-size:10px;font-weight:700;color:#f2f2f2;font-family:'Liberation Sans', sans-serif;">5</div>
<div class="t" style="left:12.22px;top:338.00px;font-size:10px;font-weight:700;color:#f2f2f2;font-family:'Liberation Sans', sans-serif;">6</div>
<div class="t" style="left:12.22px;top:359.00px;font-size:10px;font-weight:700;color:#f2f2f2;font-family:'Liberation Sans', sans-serif;">7</div>
<div class="t" style="left:12.22px;top:380.00px;font-size:10px;font-weight:700;color:#f2f2f2;font-family:'Liberation Sans', sans-serif;">8</div>
<div class="t" style="left:12.22px;top:401.00px;font-size:10px;font-weight:700;color:#f2f2f2;font-family:'Liberation Sans', sans-serif;">9</div>
<div class="t" style="left:9.45px;top:422.00px;font-size:10px;font-weight:700;color:#f2f2f2;font-family:'Liberation Sans', sans-serif;">10</div>
<div class="t" style="left:9.72px;top:443.00px;font-size:10px;font-weight:700;color:#f2f2f2;font-family:'Liberation Sans', sans-serif;">11</div>
<div class="t" style="left:9.45px;top:464.00px;font-size:10px;font-weight:700;color:#f2f2f2;font-family:'Liberation Sans', sans-serif;">12</div>
<div class="t" style="left:9.45px;top:485.00px;font-size:10px;font-weight:700;color:#f2f2f2;font-family:'Liberation Sans', sans-serif;">13</div>
<div class="t" style="left:9.45px;top:506.00px;font-size:10px;font-weight:700;color:#f2f2f2;font-family:'Liberation Sans', sans-serif;">14</div>
<div class="t" style="left:9.45px;top:527.00px;font-size:10px;font-weight:700;color:#f2f2f2;font-family:'Liberation Sans', sans-serif;">15</div>
<div class="t" style="left:9.45px;top:548.00px;font-size:10px;font-weight:700;color:#f2f2f2;font-family:'Liberation Sans', sans-serif;">16</div>
<div class="t" style="left:9.45px;top:569.00px;font-size:10px;font-weight:700;color:#f2f2f2;font-family:'Liberation Sans', sans-serif;">17</div>
<div class="t" style="left:9.45px;top:590.00px;font-size:10px;font-weight:700;color:#f2f2f2;font-family:'Liberation Sans', sans-serif;">18</div>
<div class="t" style="left:9.45px;top:611.00px;font-size:10px;font-weight:700;color:#f2f2f2;font-family:'Liberation Sans', sans-serif;">19</div>
<div class="t" style="left:9.45px;top:632.00px;font-size:10px;font-weight:700;color:#f2f2f2;font-family:'Liberation Sans', sans-serif;">20</div>
<div class="t" style="left:9.45px;top:653.00px;font-size:10px;font-weight:700;color:#f2f2f2;font-family:'Liberation Sans', sans-serif;">21</div>
<div class="t" style="left:9.45px;top:674.00px;font-size:10px;font-weight:700;color:#f2f2f2;font-family:'Liberation Sans', sans-serif;">22</div>
<div class="t" style="left:9.45px;top:716.00px;font-size:10px;font-weight:700;color:#f2f2f2;font-family:'Liberation Sans', sans-serif;">24</div>
<div class="t" style="left:9.45px;top:737.00px;font-size:10px;font-weight:700;color:#f2f2f2;font-family:'Liberation Sans', sans-serif;">25</div>
<div class="t" style="left:9.45px;top:758.00px;font-size:10px;font-weight:700;color:#f2f2f2;font-family:'Liberation Sans', sans-serif;">26</div>
<div class="t" style="left:9.45px;top:779.00px;font-size:10px;font-weight:700;color:#f2f2f2;font-family:'Liberation Sans', sans-serif;">27</div>
<div class="t" style="left:9.45px;top:800.00px;font-size:10px;font-weight:700;color:#f2f2f2;font-family:'Liberation Sans', sans-serif;">28</div>
<div class="t" style="left:9.45px;top:821.00px;font-size:10px;font-weight:700;color:#f2f2f2;font-family:'Liberation Sans', sans-serif;">29</div>
<div class="t" style="left:9.45px;top:842.00px;font-size:10px;font-weight:700;color:#f2f2f2;font-family:'Liberation Sans', sans-serif;">30</div>
<div class="t" style="left:9.45px;top:863.00px;font-size:10px;font-weight:700;color:#f2f2f2;font-family:'Liberation Sans', sans-serif;">31</div>
<div class="t" style="left:9.45px;top:884.00px;font-size:10px;font-weight:700;color:#f2f2f2;font-family:'Liberation Sans', sans-serif;">32</div>
<div class="t" style="left:9.45px;top:905.00px;font-size:10px;font-weight:700;color:#f2f2f2;font-family:'Liberation Sans', sans-serif;">33</div>
<div class="t" style="left:9.45px;top:926.00px;font-size:10px;font-weight:700;color:#f2f2f2;font-family:'Liberation Sans', sans-serif;">34</div>
<div class="t" style="left:9.45px;top:947.00px;font-size:10px;font-weight:700;color:#f2f2f2;font-family:'Liberation Sans', sans-serif;">35</div>
<div class="t" style="left:9.45px;top:968.00px;font-size:10px;font-weight:700;color:#f2f2f2;font-family:'Liberation Sans', sans-serif;">36</div>
<div class="t" style="left:9.45px;top:989.00px;font-size:10px;font-weight:700;color:#f2f2f2;font-family:'Liberation Sans', sans-serif;">37</div>
<div class="r" style="left:4px;top:687px;width:22px;height:20px;background:#5b5b5b;"></div>
<div class="r" style="left:25px;top:687px;width:2px;height:20px;background:#1f7a44;"></div>
<div class="t" style="left:9.45px;top:695.00px;font-size:10px;font-weight:700;color:#f2f2f2;font-family:'Liberation Sans', sans-serif;">23</div>
<div class="r" style="left:91px;top:245px;width:340px;height:21px;background:#d9e1f2;"></div>
<div class="r" style="left:91px;top:266px;width:340px;height:1px;background:#8eaadb;"></div>
<div class="r" style="left:431px;top:245px;width:429px;height:22px;background:#d9e1f2;border:1.5px solid #000;box-sizing:border-box;"></div>
<div class="r" style="left:91px;top:287px;width:768px;height:42px;background:#d9e1f2;"></div>
<div class="r" style="left:0px;top:329px;width:1924px;height:1px;background:#9a9a9a;"></div>
<div class="r" style="left:91px;top:350px;width:633px;height:1px;background:#8eaadb;"></div>
<div class="r" style="left:91px;top:351px;width:633px;height:20px;background:#d9e1f2;"></div>
<div class="t" style="left:94.4px;top:250.00px;font-size:14.1px;font-weight:400;color:#000;font-family:'Liberation Sans', sans-serif;">Currency Code</div>
<div class="t" style="left:318.1px;top:250.00px;font-size:14.1px;font-weight:400;color:#000;font-family:'Liberation Sans', sans-serif;">(All)</div>
<div class="t" style="left:467.3px;top:250.00px;font-size:14.1px;font-weight:700;color:#000;font-family:'Liberation Sans', sans-serif;">Low Margin Check</div>
<div class="t" style="left:829.5px;top:251.00px;font-size:13.6px;font-weight:700;color:#000;font-family:'Liberation Sans', sans-serif;">15%</div>
<div class="t" style="left:434.2px;top:293.00px;font-size:13.9px;font-weight:700;color:#000;font-family:'Liberation Sans', sans-serif;">Values</div>
<div class="t" style="left:94.4px;top:313.00px;font-size:14.1px;font-weight:700;color:#000;font-family:'Liberation Sans', sans-serif;">Billing Date</div>
<div class="t" style="left:318.1px;top:313.00px;font-size:14.1px;font-weight:700;color:#000;font-family:'Liberation Sans', sans-serif;">Service Name</div>
<div class="t" style="left:434.2px;top:314.00px;font-size:13.7px;font-weight:700;color:#000;font-family:'Liberation Sans', sans-serif;">Total Costs</div>
<div class="t" style="left:530.2px;top:313.00px;font-size:14px;font-weight:700;color:#000;font-family:'Liberation Sans', sans-serif;">Total Sales.</div>
<div class="t" style="left:645.6px;top:313.00px;font-size:14.1px;font-weight:700;color:#000;font-family:'Liberation Sans', sans-serif;">Margin%</div>
<div class="t" style="left:772.5px;top:314.00px;font-size:13.2px;font-weight:700;color:#000;font-family:'Liberation Sans', sans-serif;">Check</div>
<div class="t" style="left:104.4px;top:334.00px;font-size:14.3px;font-weight:700;color:#000;font-family:'Liberation Sans', sans-serif;">(blank)</div>
<div class="t" style="left:318.1px;top:334.00px;font-size:14.3px;font-weight:400;color:#000;font-family:'Liberation Sans', sans-serif;">(blank)</div>
<div class="t" style="left:651px;top:334.00px;font-size:14.6px;font-weight:400;color:#000;font-family:'Liberation Sans', sans-serif;">#DIV/0!</div>
<div class="t" style="left:650px;top:355.00px;font-size:14.6px;font-weight:700;color:#000;font-family:'Liberation Sans', sans-serif;">#DIV/0!</div>
<div class="t" style="left:94.4px;top:355.00px;font-size:14.5px;font-weight:700;color:#000;font-family:'Liberation Sans', sans-serif;">Grand Total</div>
<div class="r" style="left:96.9px;top:338.8px;width:5px;height:5px;border-radius:50%;border:1px solid #7d9bd0;box-sizing:border-box;"></div>
<div class="r" style="left:98.6px;top:340.5px;width:1.6px;height:1.6px;background:#7d9bd0;"></div>
<div class="r" style="left:298.2px;top:311.1px;width:16.6px;height:16.6px;box-sizing:border-box;border:1px solid #50545c;border-radius:2px;background:linear-gradient(#fff,#f2f2f2);"></div>
<svg class="r" style="left:302.0px;top:317.1px;" width="9" height="6" viewBox="0 0 9 6" fill="none"><path d="M0 0 H8.9 L4.45 5.7 Z" fill="#7a7a7a"/></svg>
<div class="r" style="left:414.2px;top:248.1px;width:16.6px;height:16.6px;box-sizing:border-box;border:1px solid #50545c;border-radius:2px;background:linear-gradient(#fff,#f2f2f2);"></div>
<svg class="r" style="left:418.0px;top:254.1px;" width="9" height="6" viewBox="0 0 9 6" fill="none"><path d="M0 0 H8.9 L4.45 5.7 Z" fill="#7a7a7a"/></svg>
<div class="r" style="left:414.2px;top:311.1px;width:16.6px;height:16.6px;box-sizing:border-box;border:1px solid #50545c;border-radius:2px;background:linear-gradient(#fff,#f2f2f2);"></div>
<svg class="r" style="left:418.0px;top:317.1px;" width="9" height="6" viewBox="0 0 9 6" fill="none"><path d="M0 0 H8.9 L4.45 5.7 Z" fill="#7a7a7a"/></svg>
<div class="r" style="left:510.3px;top:311.1px;width:16.6px;height:16.6px;box-sizing:border-box;border:1px solid #50545c;border-radius:2px;background:linear-gradient(#fff,#f2f2f2);"></div>
<svg class="r" style="left:514.1px;top:317.1px;" width="9" height="6" viewBox="0 0 9 6" fill="none"><path d="M0 0 H8.9 L4.45 5.7 Z" fill="#7a7a7a"/></svg>
<div class="r" style="left:609.2px;top:311.1px;width:16.6px;height:16.6px;box-sizing:border-box;border:1px solid #50545c;border-radius:2px;background:linear-gradient(#fff,#f2f2f2);"></div>
<svg class="r" style="left:613.0px;top:317.1px;" width="9" height="6" viewBox="0 0 9 6" fill="none"><path d="M0 0 H8.9 L4.45 5.7 Z" fill="#7a7a7a"/></svg>
<div class="r" style="left:707.2px;top:311.1px;width:16.6px;height:16.6px;box-sizing:border-box;border:1px solid #50545c;border-radius:2px;background:linear-gradient(#fff,#f2f2f2);"></div>
<svg class="r" style="left:711.0px;top:317.1px;" width="9" height="6" viewBox="0 0 9 6" fill="none"><path d="M0 0 H8.9 L4.45 5.7 Z" fill="#7a7a7a"/></svg>
<div class="r" style="left:842.2px;top:311.1px;width:16.6px;height:16.6px;box-sizing:border-box;border:1px solid #50545c;border-radius:2px;background:linear-gradient(#fff,#f2f2f2);"></div>
<svg class="r" style="left:846.0px;top:317.1px;" width="9" height="6" viewBox="0 0 9 6" fill="none"><path d="M0 0 H8.9 L4.45 5.7 Z" fill="#7a7a7a"/></svg>
<div class="r" style="left:723px;top:685px;width:138px;height:24px;background:transparent;border:2px solid #1d6b3e;box-sizing:border-box;"></div>
<div class="r" style="left:856px;top:704px;width:5px;height:5px;background:#1d6b3e;border:1px solid #fff;"></div>
<div class="r" style="left:4px;top:1007px;width:1920px;height:23px;background:#333333;"></div>
<div class="r" style="left:64px;top:1007px;width:1156px;height:23px;background:#1f1f1f;"></div>
<div class="r" style="left:64px;top:1007px;width:1px;height:23px;background:#555;"></div>
<svg class="r" style="left:17px;top:1016px;" width="11" height="11" viewBox="0 0 11 11" fill="none"><path d="M9.8 0.6 V10.4 L1.2 5.5 Z" fill="#6a6a6a"/></svg>
<svg class="r" style="left:40px;top:1016px;" width="11" height="11" viewBox="0 0 11 11" fill="none"><path d="M1.2 0.6 V10.4 L9.8 5.5 Z" fill="#6a6a6a"/></svg>
<div class="t" style="left:86.5px;top:1014.00px;font-size:12.6px;font-weight:400;color:#a3a3a3;font-family:'Liberation Sans', sans-serif;">Billing Import from Cloudmore</div>
<div class="r" style="left:275px;top:1007px;width:215.5px;height:21.5px;background:#ffffff;"></div>
<div class="t" style="left:296.6px;top:1014.00px;font-size:12.9px;font-weight:400;color:#1e7b45;font-family:'Liberation Sans', sans-serif;-webkit-text-stroke:0.4px #1e7b45;">Service Invoice Reconciliation</div>
<div class="t" style="left:510.8px;top:1014.00px;font-size:12.5px;font-weight:400;color:#a3a3a3;font-family:'Liberation Sans', sans-serif;">Customer Margin Report</div>
<div class="r" style="left:668px;top:1011px;width:1px;height:19px;background:#444;"></div>
<div class="t" style="left:690.6px;top:1014.00px;font-size:12.5px;font-weight:400;color:#a3a3a3;font-family:'Liberation Sans', sans-serif;">Customer Service Margin Report</div>
<div class="r" style="left:894px;top:1011px;width:1px;height:19px;background:#444;"></div>
<div class="t" style="left:914.8px;top:1014.00px;font-size:12.6px;font-weight:400;color:#a3a3a3;font-family:'Liberation Sans', sans-serif;">Customer Product Margin</div>
<div class="r" style="left:1079px;top:1011px;width:1px;height:19px;background:#444;"></div>
<div class="t" style="left:1098.6px;top:1014.00px;font-size:12.5px;font-weight:400;color:#a3a3a3;font-family:'Liberation Sans', sans-serif;">Billing Export Data</div>
<div class="r" style="left:1220px;top:1011px;width:1px;height:19px;background:#444;"></div>
<svg class="r" style="left:1234px;top:1014px;" width="12" height="12" viewBox="0 0 12 12" fill="none"><path d="M6 1 V11 M1 6 H11" stroke="#e0e0e0" stroke-width="1.8"/></svg>
<div class="r" style="left:1258px;top:1011px;width:1px;height:19px;background:#444;"></div>
<div class="r" style="left:1923px;top:5px;width:1px;height:1025px;background:#5a5a5a;"></div>
<div class="r" style="left:4px;top:203px;width:1px;height:827px;background:#5c5c5c;"></div>
<div class="r" style="left:1880px;top:540px;width:44px;height:110px;background:transparent;background:radial-gradient(ellipse at 100% 50%, rgba(0,0,0,0.045), rgba(0,0,0,0) 70%);"></div>
<div class="r" style="left:1922.5px;top:562px;width:1px;height:60px;background:#c4c4c4;"></div>
</body></html>
